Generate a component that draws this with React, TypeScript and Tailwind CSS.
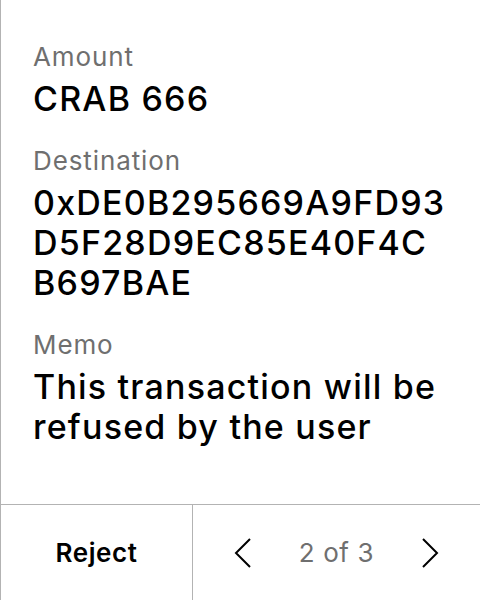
const fields = [
  { label: "Amount", lines: ["CRAB 666"] },
  { label: "Destination", lines: ["0xDE0B295669A9FD93", "D5F28D9EC85E40F4C", "B697BAE"] },
  { label: "Memo", lines: ["This transaction will be", "refused by the user"] },
];

export default function App() {
  return (
    <div
      className="flex h-[600px] w-[480px] flex-col overflow-hidden border-l border-[#b3b3b3] bg-white text-black"
      style={{ fontFamily: "Inter, sans-serif" }}
    >
      {/* ================= REVIEW CONTENT ================= */}
      <div className="flex flex-1 flex-col gap-[26px] pl-8 pt-[41px]">
        {fields.map((field) => (
          <div key={field.label} className="flex flex-col gap-[6px]">
            <span className="text-[26px] leading-[32px] tracking-[0.9px] text-[#6f6f6f]">{field.label}</span>
            <div className="flex flex-col text-[34px] leading-[40px] font-medium tracking-[1.2px] whitespace-nowrap">
              {field.lines.map((line) => (
                <span key={line}>{line}</span>
              ))}
            </div>
          </div>
        ))}
      </div>

      {/* ================= FOOTER ================= */}
      <div className="flex h-[96px] border-t border-[#b3b3b3]">
        <button className="flex w-[192px] items-center justify-center border-r border-[#b3b3b3] text-[26px] font-semibold tracking-[0.6px]">
          Reject
        </button>
        <div className="flex flex-1 items-center justify-between px-[41px]">
          <svg width="18" height="32" viewBox="0 0 18 32" fill="none">
            <path d="M16 2 L2 16 L16 30" stroke="#000" strokeWidth="2" />
          </svg>
          <span className="text-[26px] tracking-[0.6px] text-[#6f6f6f]">2 of 3</span>
          <svg width="18" height="32" viewBox="0 0 18 32" fill="none">
            <path d="M2 2 L16 16 L2 30" stroke="#000" strokeWidth="2" />
          </svg>
        </div>
      </div>
    </div>
  );
}
